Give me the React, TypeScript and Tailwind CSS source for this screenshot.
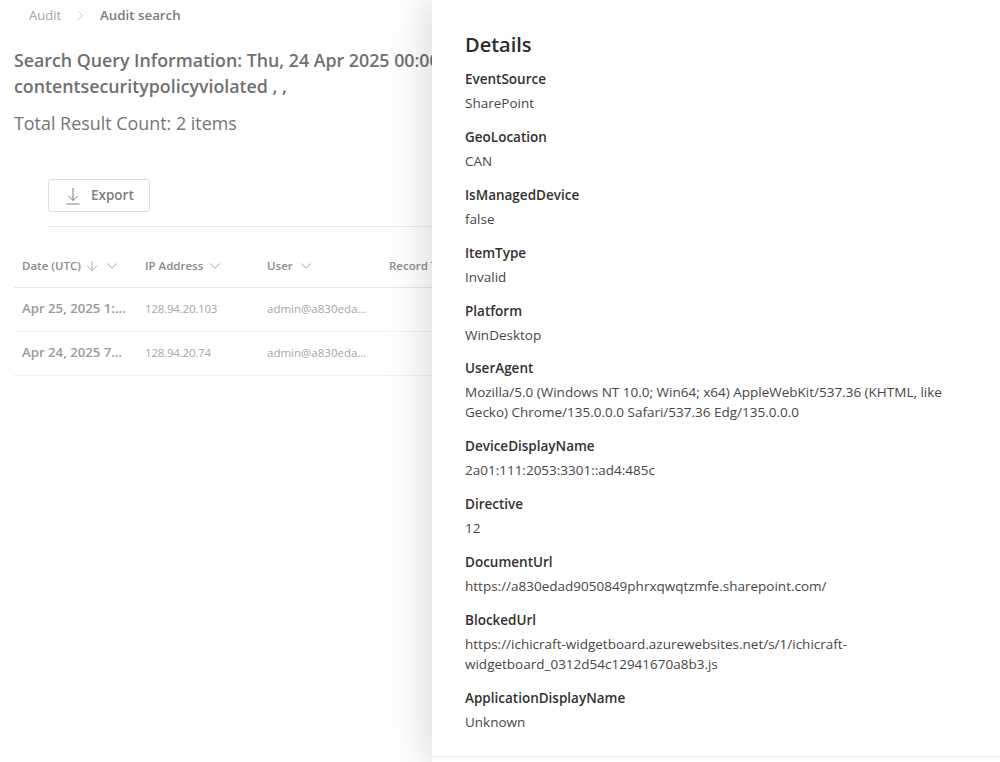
import { ArrowDown, ChevronDown, ChevronRight } from 'lucide-react'

const details: { label: string; value: string[] }[] = [
  { label: 'EventSource', value: ['SharePoint'] },
  { label: 'GeoLocation', value: ['CAN'] },
  { label: 'IsManagedDevice', value: ['false'] },
  { label: 'ItemType', value: ['Invalid'] },
  { label: 'Platform', value: ['WinDesktop'] },
  {
    label: 'UserAgent',
    value: [
      'Mozilla/5.0 (Windows NT 10.0; Win64; x64) AppleWebKit/537.36 (KHTML, like',
      'Gecko) Chrome/135.0.0.0 Safari/537.36 Edg/135.0.0.0',
    ],
  },
  { label: 'DeviceDisplayName', value: ['2a01:111:2053:3301::ad4:485c'] },
  { label: 'Directive', value: ['12'] },
  { label: 'DocumentUrl', value: ['https://a830edad9050849phrxqwqtzmfe.sharepoint.com/'] },
  {
    label: 'BlockedUrl',
    value: [
      'https://ichicraft-widgetboard.azurewebsites.net/s/1/ichicraft-',
      'widgetboard_0312d54c12941670a8b3.js',
    ],
  },
  { label: 'ApplicationDisplayName', value: ['Unknown'] },
]

const rows = [
  { date: 'Apr 25, 2025 1:…', ip: '128.94.20.103', user: 'admin@a830eda…' },
  { date: 'Apr 24, 2025 7…', ip: '128.94.20.74', user: 'admin@a830eda…' },
]

function ExportIcon() {
  return (
    <svg viewBox="0 0 16 18" className="mr-[10px] h-[18px] w-[16px]" fill="none" stroke="currentColor" strokeWidth={1}>
      <path d="M8 1v12.5M3.5 9 8 13.5 12.5 9M1.5 17h13" />
    </svg>
  )
}

export default function App() {
  return (
    <div className="relative h-[762px] w-[1000px] overflow-hidden bg-white font-['Open_Sans','Noto_Sans',sans-serif]">
      {/* page behind the panel */}
      <div className="h-full w-[432px] overflow-hidden">
        <div className="flex h-[31px] items-center pl-[29px] text-[13px] text-[#a3a3a3]">
          <span>Audit</span>
          <ChevronRight className="mx-[12px] h-[15px] w-[15px]" strokeWidth={1} />
          <span className="text-[13.3px] font-semibold text-[#7a7a7a]">Audit search</span>
        </div>

        <div className="pl-[14px] pt-[16px] text-[17.8px] font-semibold leading-[26px] text-[#707070]">
          <div className="whitespace-nowrap">Search Query Information: Thu, 24 Apr 2025 00:00</div>
          <div className="whitespace-nowrap">contentsecuritypolicyviolated , ,</div>
        </div>
        <div className="pl-[14px] pt-[11px] text-[17.9px] leading-[26px] text-[#757575]">
          Total Result Count: 2 items
        </div>

        <div className="ml-[48px] mt-[43px] border-b border-[#ececec] pb-[14px]">
          <button className="flex h-[33px] w-[102px] items-center rounded-[3px] border border-[#dedede] pl-[16px] text-[13.5px] font-semibold text-[#7d7d7d]">
            <ExportIcon />
            Export
          </button>
        </div>

        <div className="ml-[14px] mt-[16px] w-[600px]">
          <div className="flex h-[45px] items-center border-b border-[#e8e8e8] pl-[8px] pt-[2px] text-[11.5px] font-semibold text-[#8a8a8a]">
            <div className="flex w-[123px] items-center">
              Date (UTC)
              <ArrowDown className="ml-[3px] h-[16px] w-[16px]" strokeWidth={1} />
              <ChevronDown className="ml-[3px] h-[18px] w-[18px]" strokeWidth={1} />
            </div>
            <div className="flex w-[122px] items-center">
              IP Address
              <ChevronDown className="ml-[3px] h-[18px] w-[18px]" strokeWidth={1} />
            </div>
            <div className="flex w-[122px] items-center">
              User
              <ChevronDown className="ml-[4px] h-[18px] w-[18px]" strokeWidth={1} />
            </div>
            <div className="whitespace-nowrap">Record Type</div>
          </div>
          {rows.map((r) => (
            <div key={r.ip} className="flex h-[44px] items-center border-b border-[#f1f1f1] pb-[2px] pl-[8px]">
              <div className="w-[123px] text-[13.2px] font-semibold text-[#9a9a9a]">{r.date}</div>
              <div className="w-[122px] text-[11.5px] tracking-[-0.2px] text-[#a6a6a6]">{r.ip}</div>
              <div className="w-[122px] text-[11.5px] text-[#a6a6a6]">{r.user}</div>
            </div>
          ))}
        </div>
      </div>

      {/* details panel */}
      <div className="absolute bottom-0 right-0 top-0 w-[568px] bg-white shadow-[-4px_0_40px_rgba(0,0,0,0.16)]">
        <div className="pl-[33px] pr-[40px] pt-[31px]">
          <h2 className="text-[20px] font-semibold leading-[28px] text-[#2b2b2b]">Details</h2>
          <div className="pt-[10px]">
            {details.map((d) => (
              <div key={d.label} className="pb-[13.9px]">
                <div className="text-[13.5px] font-semibold leading-[20px] text-[#323130]">{d.label}</div>
                <div className="pt-[4px] text-[13.5px] leading-[20px] text-[#484644]">
                  {d.value.map((line) => (
                    <div key={line} className="whitespace-nowrap">{line}</div>
                  ))}
                </div>
              </div>
            ))}
          </div>
        </div>
        <div className="absolute bottom-[5px] left-0 right-0 border-t border-[#e8e8e8]" />
      </div>
    </div>
  )
}
